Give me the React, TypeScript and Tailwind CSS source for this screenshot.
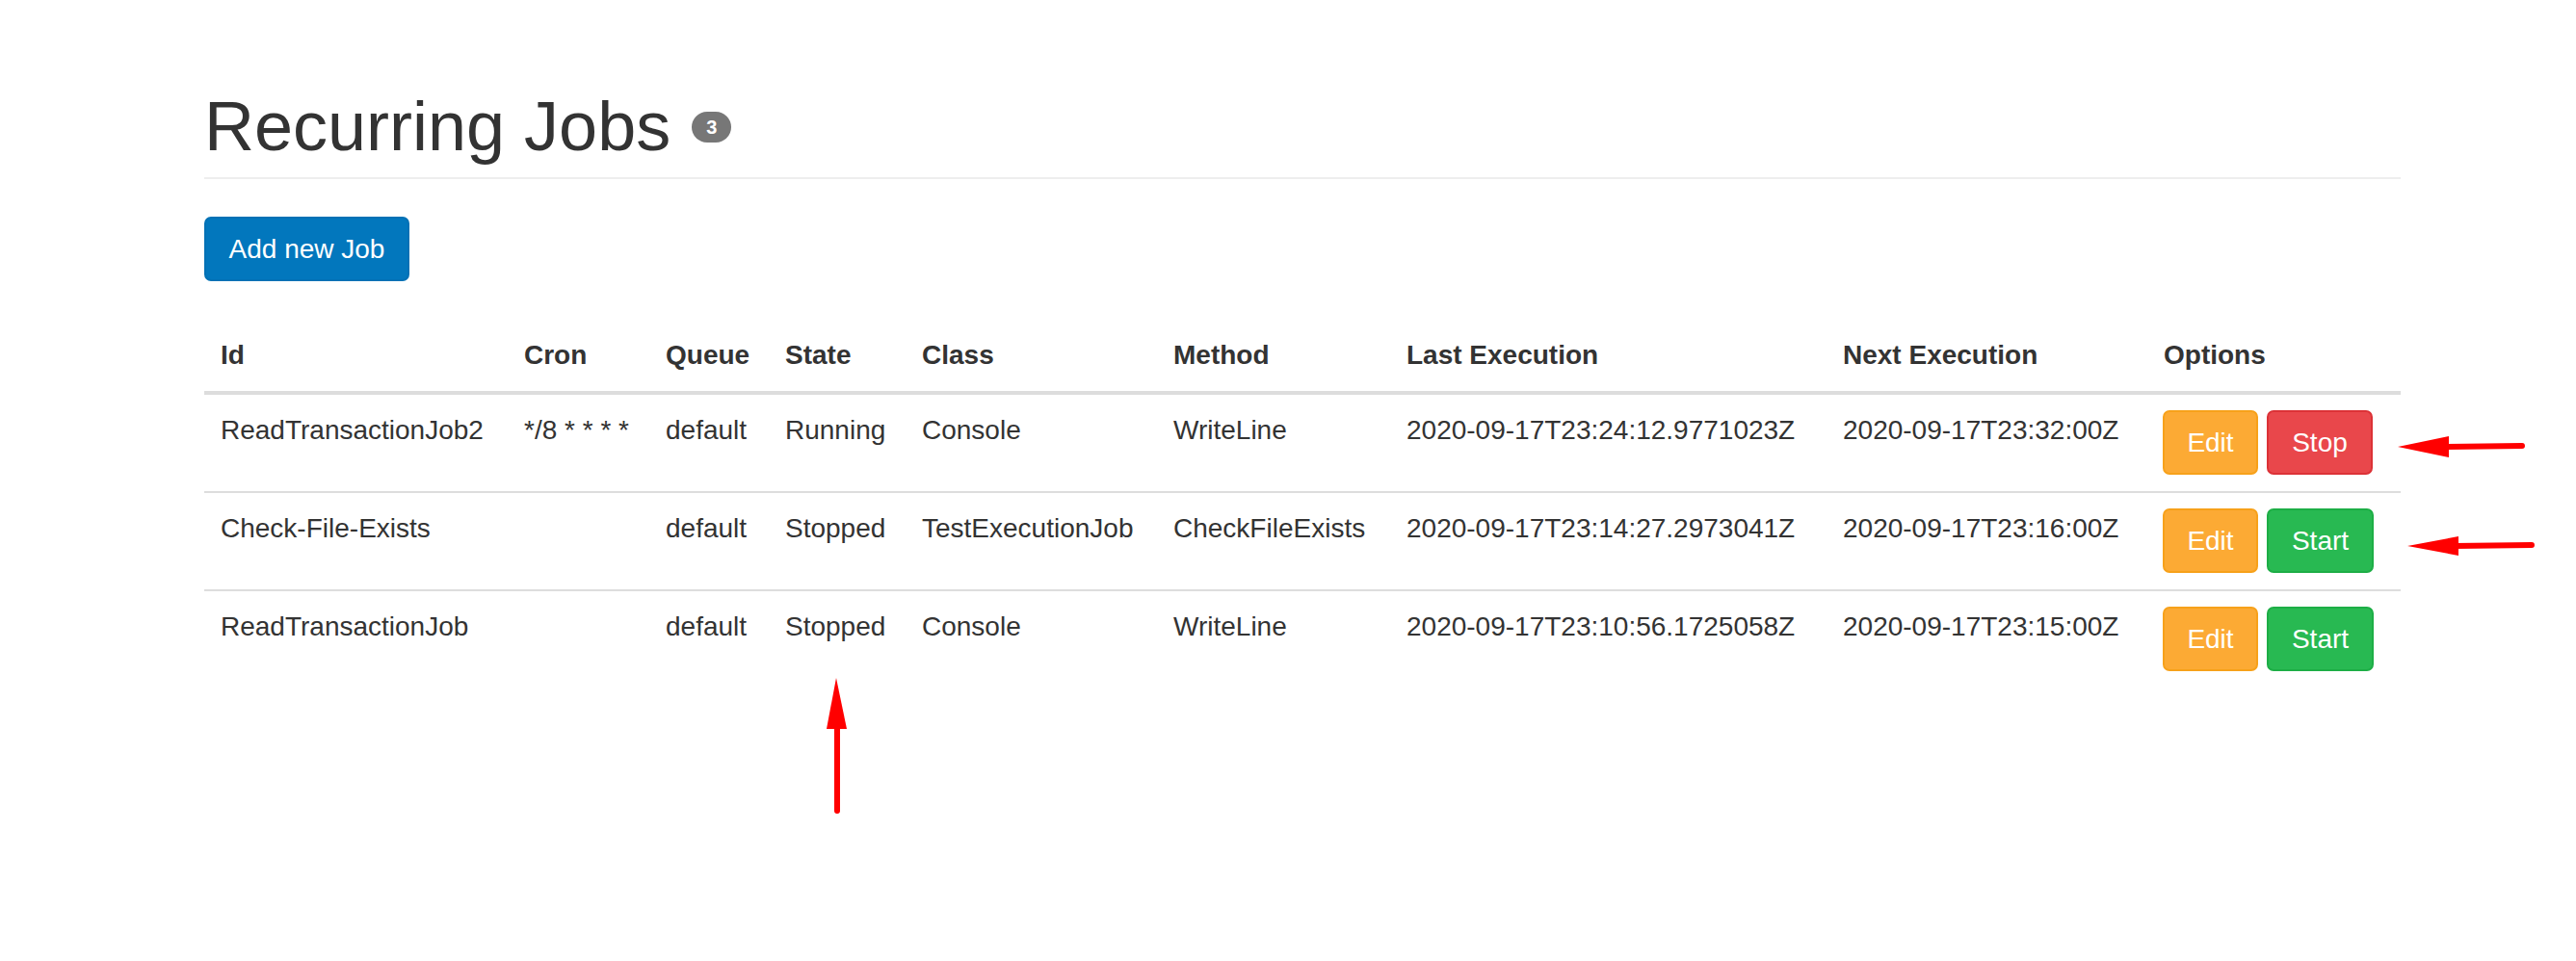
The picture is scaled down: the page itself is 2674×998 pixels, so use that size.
import React from "react";

const cols =
  "grid grid-cols-[315px_147px_124px_142px_261px_242px_453px_333px_263px]";

type Job = {
  id: string;
  cron: string;
  queue: string;
  state: string;
  cls: string;
  method: string;
  last: string;
  next: string;
  running: boolean;
};

const jobs: Job[] = [
  {
    id: "ReadTransactionJob2",
    cron: "*/8 * * * *",
    queue: "default",
    state: "Running",
    cls: "Console",
    method: "WriteLine",
    last: "2020-09-17T23:24:12.9771023Z",
    next: "2020-09-17T23:32:00Z",
    running: true,
  },
  {
    id: "Check-File-Exists",
    cron: "",
    queue: "default",
    state: "Stopped",
    cls: "TestExecutionJob",
    method: "CheckFileExists",
    last: "2020-09-17T23:14:27.2973041Z",
    next: "2020-09-17T23:16:00Z",
    running: false,
  },
  {
    id: "ReadTransactionJob",
    cron: "",
    queue: "default",
    state: "Stopped",
    cls: "Console",
    method: "WriteLine",
    last: "2020-09-17T23:10:56.1725058Z",
    next: "2020-09-17T23:15:00Z",
    running: false,
  },
];

const headers = [
  "Id",
  "Cron",
  "Queue",
  "State",
  "Class",
  "Method",
  "Last Execution",
  "Next Execution",
  "Options",
];

export default function App() {
  return (
    <div className="relative w-full min-h-[998px] bg-white font-['Liberation_Sans',Arial,sans-serif] text-[#333]">
      <div className="w-[2492px] pl-[212px]">
        {/* Title */}
        <div className="pt-[92px] pb-[13px] border-b-2 border-[#eee] flex items-center gap-[22px]">
          <h1 className="text-[72px] leading-[79px] font-normal text-[#333]">
            Recurring Jobs
          </h1>
          <span className="flex items-center justify-center h-[32px] w-[41px] rounded-full bg-[#777] text-white text-[20px] font-bold leading-none">
            3
          </span>
        </div>

        {/* Add button */}
        <div className="mt-[39px]">
          <button className="h-[67px] w-[213px] rounded-[7px] bg-[#0277bd] border-2 border-[#0271b5] text-white text-[28px] leading-none">
            Add new Job
          </button>
        </div>

        {/* Table */}
        <div className="mt-[36px] text-[28px]">
          <div
            className={`${cols} pt-[20px] pb-[16px] border-b-2 border-[#ddd] font-bold leading-[42px] text-[#333]`}
          >
            {headers.map((h) => (
              <div key={h} className="pl-[17px] whitespace-nowrap">
                {h}
              </div>
            ))}
          </div>
          {jobs.map((j) => (
            <div
              key={j.id}
              className={`${cols} pt-[16px] pb-[17px] border-t-2 border-[#ddd] leading-[42px] text-[#333]`}
            >
              <div className="pl-[17px] whitespace-nowrap">{j.id}</div>
              <div className="pl-[17px] whitespace-nowrap">{j.cron}</div>
              <div className="pl-[17px] whitespace-nowrap">{j.queue}</div>
              <div className="pl-[17px] whitespace-nowrap">{j.state}</div>
              <div className="pl-[17px] whitespace-nowrap">{j.cls}</div>
              <div className="pl-[17px] whitespace-nowrap">{j.method}</div>
              <div className="pl-[17px] whitespace-nowrap">{j.last}</div>
              <div className="pl-[17px] whitespace-nowrap">{j.next}</div>
              <div className="pl-[16px] flex gap-[9px]">
                <button className="h-[67px] w-[99px] rounded-[7px] bg-[#fcaa34] border-2 border-[#f7a11a] text-white text-[28px] leading-none">
                  Edit
                </button>
                {j.running ? (
                  <button className="h-[67px] w-[110px] rounded-[7px] bg-[#e9474b] border-2 border-[#dc3237] text-white text-[28px] leading-none">
                    Stop
                  </button>
                ) : (
                  <button className="h-[67px] w-[111px] rounded-[7px] bg-[#28b952] border-2 border-[#1dae46] text-white text-[28px] leading-none">
                    Start
                  </button>
                )}
              </div>
            </div>
          ))}
        </div>
      </div>

      {/* Annotation arrows */}
      <svg
        className="absolute left-0 top-0 pointer-events-none"
        width="2674"
        height="998"
        viewBox="0 0 2674 998"
      >
        <line x1="2618" y1="463" x2="2538" y2="464" stroke="#ff0000" strokeWidth="6" strokeLinecap="round" />
        <polygon points="2489,464 2542,453 2542,475" fill="#ff0000" />
        <line x1="2628" y1="566" x2="2548" y2="567" stroke="#ff0000" strokeWidth="6" strokeLinecap="round" />
        <polygon points="2499,567 2552,557 2552,577" fill="#ff0000" />
        <line x1="869" y1="842" x2="869" y2="752" stroke="#ff0000" strokeWidth="6" strokeLinecap="round" />
        <polygon points="868,704 858,757 879,757" fill="#ff0000" />
      </svg>
    </div>
  );
}
